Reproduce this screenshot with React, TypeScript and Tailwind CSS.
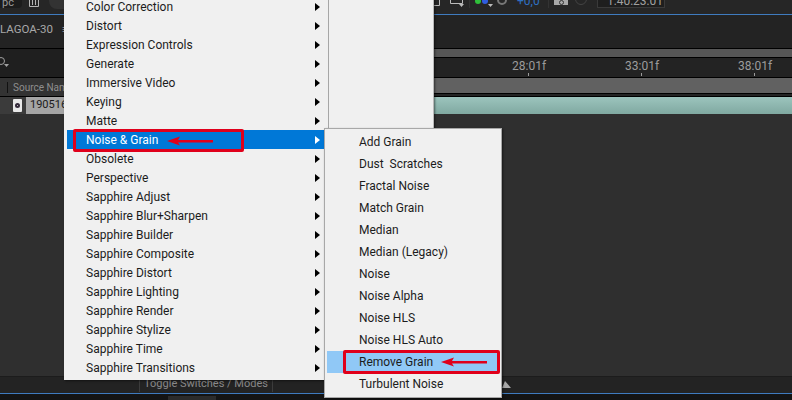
const mainItems = [
  "Color Correction",
  "Distort",
  "Expression Controls",
  "Generate",
  "Immersive Video",
  "Keying",
  "Matte",
  "Noise & Grain",
  "Obsolete",
  "Perspective",
  "Sapphire Adjust",
  "Sapphire Blur+Sharpen",
  "Sapphire Builder",
  "Sapphire Composite",
  "Sapphire Distort",
  "Sapphire Lighting",
  "Sapphire Render",
  "Sapphire Stylize",
  "Sapphire Time",
  "Sapphire Transitions",
];

const subItems = [
  "Add Grain",
  "Dust  Scratches",
  "Fractal Noise",
  "Match Grain",
  "Median",
  "Median (Legacy)",
  "Noise",
  "Noise Alpha",
  "Noise HLS",
  "Noise HLS Auto",
  "Remove Grain",
  "Turbulent Noise",
];

function RedArrow() {
  return (
    <svg width="46" height="10" viewBox="0 0 46 10" className="shrink-0">
      <path d="M0 5 L13 0.5 L11 4 L46 4 L46 6.5 L11 6.5 L13 9.5 Z" fill="#e0001b" />
    </svg>
  );
}

function Caret({ color }: { color: string }) {
  return (
    <svg width="5" height="8" viewBox="0 0 5 8" className="shrink-0">
      <path d="M0 0 L5 4 L0 8 Z" fill={color} />
    </svg>
  );
}

function Toolbar() {
  return (
    <div className="flex h-[14px] items-start overflow-hidden bg-[#262626] text-[11px] text-[#9a9a9a]">
      <div className="flex h-[8px] w-[22px] items-end justify-end rounded-br-sm bg-[#1c1c1c] pr-2 leading-[10px]">
        pc
      </div>
      <svg width="10" height="7" viewBox="0 0 10 7" className="ml-[7px]">
        <path d="M0.5 0 V6.5 H9.5 V0 M3.5 0 V5 M6.5 0 V5" fill="none" stroke="#b5b5b5" />
      </svg>
      <div className="ml-[10px] h-[9px] w-[15px] rounded-bl-lg bg-[#333333]" />
      <svg width="10" height="6" viewBox="0 0 10 6" className="ml-[366px]">
        <path d="M0 5.5 H9.5 V0" fill="none" stroke="#bbbbbb" />
      </svg>
      <svg width="14" height="7" viewBox="0 0 14 7" className="ml-[10px]">
        <path d="M0.5 0 V3.5 H12.5 V0" fill="none" stroke="#bbbbbb" />
        <path d="M9 4 H14 L11.5 7 Z" fill="#bbbbbb" />
      </svg>
      <div className="ml-[5px] h-[8px] w-px bg-[#333333]" />
      <div className="ml-[5px] flex gap-[1px]">
        <div className="mt-[-2px] size-[6px] rounded-full bg-[#2fbf3a]" />
        <div className="mt-[-2px] size-[6px] rounded-full bg-[#2f5de0]" />
      </div>
      <svg width="5" height="7" viewBox="0 0 5 7">
        <path d="M0 4 H5 L2.5 7 Z" fill="#bbbbbb" />
      </svg>
      <div className="ml-[4px] mt-[-5px] size-[10px] rounded-full border-2 border-[#777777]" />
      <div className="ml-[10px] w-[22px] text-[12px] leading-[3px] text-[#2e6fc0]">+0,0</div>
      <div className="ml-[9px] h-[8px] w-px bg-[#333333]" />
      <div className="ml-[5px] flex h-[5px] w-[14px] items-end justify-center bg-[#a8a8a8]">
        <div className="size-[5px] rounded-full border border-[#333333]" />
      </div>
      <div className="ml-[7px] mt-[-7px] size-[12px] rounded-full border border-[#444444]" />
      <div className="ml-[10px] h-[8px] w-[68px] border-x border-b border-[#3a3a3a] bg-[#1e1e1e] pl-[9px] text-[12px] leading-[3px] text-[#a0a0a0]">
        1:40:23:01
      </div>
    </div>
  );
}

function Tick({ label }: { label: string }) {
  return (
    <div className="flex w-[113px] shrink-0 flex-col items-start">
      <span>{label}</span>
      <div className="ml-[16px] h-[3px] w-px bg-[#9c9c9c]" />
    </div>
  );
}

function Timeline() {
  return (
    <div className="flex h-[400px] flex-col overflow-hidden bg-[#2f2f2f]">
      <Toolbar />
      <div className="h-px bg-[#3f7bbf]" />
      <div className="flex h-[33px] items-center bg-[#232323] pb-[3px] text-[11.5px] text-[#a8a8a8]">
        <span>LAGOA-30</span>
        <span className="ml-[9px] text-[11px]">≡</span>
      </div>
      <div className="flex h-[29px] border-t border-black">
        <div className="flex w-[64px] shrink-0 items-center bg-[#1f1f1f] pb-[3px]">
          <svg width="10" height="12" viewBox="0 0 10 12">
            <circle cx="1" cy="5" r="3.5" fill="none" stroke="#a0a0a0" />
            <path d="M4 8 H9 L6.5 11 Z" fill="#a0a0a0" />
          </svg>
        </div>
        <div className="flex min-w-0 flex-1 flex-col">
          <div className="h-[8px] bg-[#565656]" />
          <div className="h-px bg-black" />
          <div className="flex h-[19px] overflow-hidden bg-[#232323] pl-[448px] pt-[1px] text-[12px] leading-[14px] text-[#9c9c9c]">
            <Tick label="28:01f" />
            <Tick label="33:01f" />
            <Tick label="38:01f" />
          </div>
        </div>
      </div>
      <div className="flex h-[20px] border-t border-black">
        <div className="flex w-[64px] shrink-0 items-center overflow-hidden border-b border-black bg-[#333333] pl-[7px] text-[10px] text-[#8f8f8f]">
          <div className="mr-[5px] h-[11px] w-px shrink-0 bg-[#111111]" />
          <span className="whitespace-nowrap">Source Name</span>
        </div>
        <div className="flex min-w-0 flex-1 flex-col">
          <div className="h-[15px] bg-[#616161]" />
          <div className="h-px bg-black" />
          <div className="h-[2px] bg-[#242424]" />
          <div className="h-px bg-black" />
        </div>
      </div>
      <div className="flex h-[17px]">
        <div className="flex w-[64px] shrink-0 items-center overflow-hidden bg-[#3b3b3b] pl-[13px]">
          <div className="flex h-[13px] w-[9px] shrink-0 items-center justify-center rounded-[1px] bg-[#e8e8e8]">
            <div className="size-[5px] rounded-full border-2 border-[#332a3a]" />
          </div>
          <div className="ml-[4px] flex h-[17px] flex-1 items-center bg-[#a5a5a5] pl-[4px] text-[11px] text-[#1a1a1a]">
            190516
          </div>
        </div>
        <div className="flex-1 bg-gradient-to-b from-[#9cc4bd] to-[#80a9a1]" />
      </div>
      <div className="flex-1" />
      <div className="flex h-[17px] items-start border-t border-[#1c1c1c] bg-[#232323]">
        <div className="ml-[139px] flex h-[15px] w-[134px] shrink-0 items-center justify-center whitespace-nowrap border-x border-[#3c3c3c] text-[11px] text-[#8a8a8a]">
          Toggle Switches / Modes
        </div>
        <svg width="9" height="7" viewBox="0 0 9 7" className="ml-[229px] mt-[4px]">
          <path d="M3 0 L9 7 H0 Z" fill="#a8a8a8" />
        </svg>
      </div>
      <div className="h-px bg-[#3f7bbf]" />
      <div className="flex h-[6px] bg-[#141414]">
        <div className="ml-[168px] mt-[2px] w-[48px] bg-[#2b2b2b]" />
      </div>
    </div>
  );
}

function MainMenu() {
  return (
    <div className="absolute left-[64px] top-[-3px] flex h-[383px] w-[370px] border-r border-[#b8b8b8] bg-[#f0f0f0] pl-[3px] shadow-[1px_1px_2px_rgba(0,0,0,0.5)]">
      <div className="w-[261px]">
        {mainItems.map((item, i) => {
          const active = i === 7;
          return (
            <div
              key={item}
              className={
                active
                  ? "flex h-[19px] items-center justify-between bg-[#0078d7] pl-[19px] pr-[8px] text-white"
                  : "flex h-[19px] items-center justify-between pl-[19px] pr-[8px] text-[#1c1c1c]"
              }
            >
              <span>{item}</span>
              {active && (
                <div className="absolute left-[9px] top-[132px] flex h-[23px] w-[171px] items-center rounded-[2px] border-[3px] border-[#e0001b] pl-[91px]">
                  <RedArrow />
                </div>
              )}
              <Caret color={active ? "#ffffff" : "#000000"} />
            </div>
          );
        })}
      </div>
      <div className="w-px bg-[#a6a6a6]" />
    </div>
  );
}

function SubMenu() {
  return (
    <div className="absolute left-[324px] top-[128px] h-[270px] w-[178px] border border-[#a8a8a8] bg-[#f0f0f0] px-[2px] pt-[2px] shadow-[1px_1px_2px_rgba(0,0,0,0.5)]">
      {subItems.map((item) => {
        const active = item === "Remove Grain";
        return (
          <div
            key={item}
            className={
              active
                ? "relative flex h-[22px] items-center whitespace-pre bg-[#90c8f6] pl-[32px] text-[#1c1c1c]"
                : "flex h-[22px] items-center whitespace-pre pl-[32px] text-[#1c1c1c]"
            }
          >
            {item}
            {active && (
              <div className="absolute left-[16px] top-[-1px] flex h-[24px] w-[157px] items-center rounded-[2px] border-[3px] border-[#e0001b] pl-[95px]">
                <RedArrow />
              </div>
            )}
          </div>
        );
      })}
    </div>
  );
}

export default function App() {
  return (
    <div className="relative h-[400px] w-[792px] overflow-hidden font-['Roboto',sans-serif] text-[12px]">
      <Timeline />
      <MainMenu />
      <SubMenu />
    </div>
  );
}
